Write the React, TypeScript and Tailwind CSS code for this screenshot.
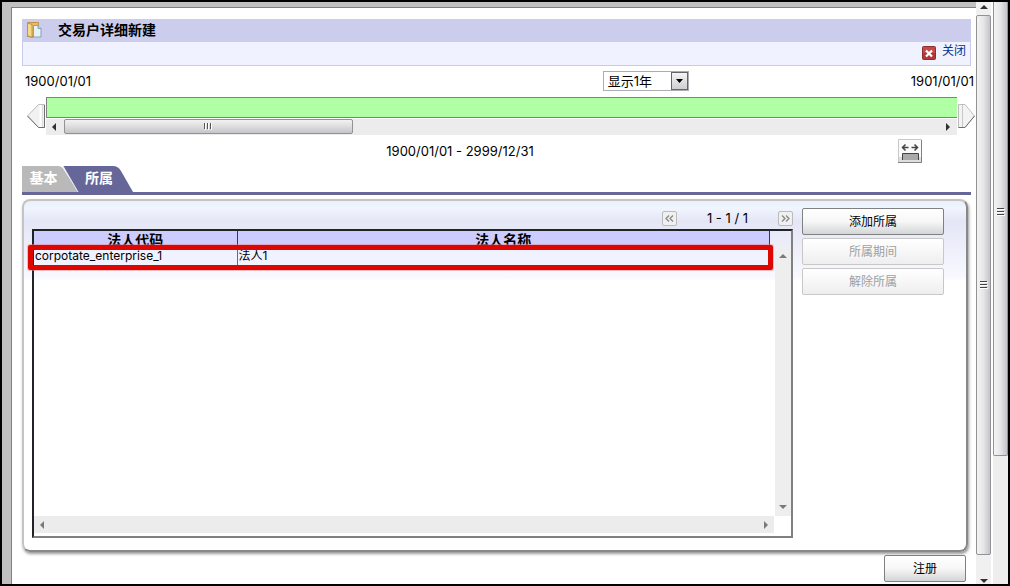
import { ReactNode } from "react"

type Direction = "up" | "down" | "left" | "right"

const arrowPaths: Record<Direction, string> = {
  up: "M0 6 4 2l4 4z",
  down: "M0 2h8L4 6z",
  left: "M6 0v8L2 4z",
  right: "M2 0l4 4-4 4z",
}

function ArrowButton({ direction, dim, className }: { direction: Direction; dim?: boolean; className: string }) {
  return (
    <button
      type="button"
      aria-label={`scroll ${direction}`}
      className={`flex shrink-0 items-center justify-center ${className}`}
    >
      <svg viewBox="0 0 8 8" className="size-2">
        <path d={arrowPaths[direction]} fill={dim ? "#7a7a7a" : "#303030"} />
      </svg>
    </button>
  )
}

function VerticalGrip() {
  return (
    <svg viewBox="0 0 8 8" className="size-2">
      <path d="M0 1.500h8M0 4.500h8M0 7.500h8" stroke="#fff" />
      <path d="M0 .500h7M0 3.500h7M0 6.500h7" stroke="#444" />
    </svg>
  )
}

function PageScrollbar() {
  return (
    <div className="flex w-[15px] shrink-0 flex-col bg-[#f0f0f0]">
      <ArrowButton direction="up" className="h-[13px] w-full pb-1" />
      <div className="flex grow-[24] items-center justify-center rounded-xs border border-[#929292] bg-linear-to-r from-[#f4f4f4] via-[#e6e6e8] to-[#c4c4ca]">
        <VerticalGrip />
      </div>
      <div className="grow" />
      <ArrowButton direction="down" className="h-[7px] w-full" />
    </div>
  )
}

function OuterScrollbar() {
  return (
    <div className="ml-0.5 flex w-[15px] shrink-0 flex-col bg-[#eee]">
      <div className="flex h-[78%] items-center justify-center rounded-b-xs border border-t-0 border-[#929292] bg-linear-to-r from-[#f4f4f4] via-[#e6e6e8] to-[#c4c4ca] pb-8">
        <VerticalGrip />
      </div>
    </div>
  )
}

function TitleBar() {
  return (
    <header>
      <div className="flex h-[23px] items-center bg-[#cccdec] pb-0.5 pl-1">
        <svg viewBox="0 0 16 16" className="size-4 shrink-0">
          <path d="M0 15h3l3 1 2-1v-1H2z" fill="#a58a60" />
          <path d="M1.500.500h11v13.500h-11z" fill="#e9bd5c" stroke="#c2924a" />
          <path d="M1.500 1l4.500 1.500V15.500l-4.500-2z" fill="#f7d988" stroke="#c2924a" />
          <path d="M7.500 3.500h4.500l3 3v8.500H7.500z" fill="#e6f2f8" stroke="#86a3b3" />
          <path d="M12 3.500v3h3" fill="#bcd5e2" stroke="#86a3b3" />
        </svg>
        <h1 className="ml-4 text-[14px] leading-5 font-bold">交易户详细新建</h1>
      </div>
      <div className="flex h-6 items-start justify-end border border-t-0 border-[#c9caea] bg-[#f0f2ff] pr-1">
        <a href="#" className="flex items-end gap-1.5 text-[12px] leading-[18px] text-[#003399]">
          <svg viewBox="0 0 14 14" className="size-3.5">
            <rect x=".5" y=".5" width="13" height="13" rx="1" fill="#c44a4a" stroke="#8c2f2f" />
            <path d="M1 7h12v6H1z" fill="#b23838" />
            <path d="M4 4.500l6 6M10 4.500l-6 6" stroke="#fff" strokeWidth="2.200" />
          </svg>
          关闭
        </a>
      </div>
    </header>
  )
}

function PeriodSelect() {
  return (
    <div className="relative mr-[222px] ml-auto">
      <select
        aria-label="显示期间"
        className="block h-5 w-[86px] appearance-none border border-[#abadb3] bg-white pl-1 text-[13px] leading-4"
      >
        <option>显示1年</option>
      </select>
      <span className="pointer-events-none absolute inset-y-px right-px flex w-[17px] items-center justify-center border border-[#666] bg-linear-to-b from-[#f4f4f4] to-[#cfcfcf]">
        <svg viewBox="0 0 7 4" className="h-1 w-[7px]">
          <path d="M0 0h7L3.500 4z" />
        </svg>
      </span>
    </div>
  )
}

function Timeline() {
  return (
    <section className="pt-[5px]">
      <div className="-mr-1.5 flex h-5 items-center pr-[3px] pl-[3px] text-[13px] leading-5">
        <span>1900/01/01</span>
        <PeriodSelect />
        <span>1901/01/01</span>
      </div>
      <div className="-mr-1 mt-1.5 flex items-start pl-[5px]">
        <button type="button" aria-label="上一期间" className="mt-[7px] shrink-0">
          <svg viewBox="0 0 19 24" className="h-6 w-[19px]">
            <path d="M.5 12 11.500.500h6v23h-6z" fill="#f1f1f1" stroke="#bdbdbd" />
            <path d="M.5 12l11 11.500h6V1" fill="none" stroke="#6e6e6e" />
            <path d="M13.500 1v22" stroke="#fff" strokeWidth="2" />
            <path d="M15.500 1v22" stroke="#ddd" />
          </svg>
        </button>
        <div className="min-w-0 flex-1">
          <div className="h-[21px] border border-r-0 border-[#808080] bg-[#b0ffa4]" />
          <div className="mt-px flex h-4 bg-[#ececec]">
            <ArrowButton direction="left" className="w-[18px] pr-0.5" />
            <div className="flex h-[15px] w-[33%] max-w-[289px] items-center justify-center rounded-xs border border-[#929292] bg-linear-to-b from-[#f2f2f2] via-[#dddde0] to-[#c6c6c9]">
              <svg viewBox="0 0 9 7" className="h-[7px] w-[9px]">
                <path d="M1.500 0v7M4.500 0v7M7.500 0v7" stroke="#fff" />
                <path d="M.5 0v6M3.500 0v6M6.500 0v6" stroke="#555" />
              </svg>
            </div>
            <ArrowButton direction="right" className="ml-auto w-[18px]" />
          </div>
        </div>
        <button type="button" aria-label="下一期间" className="mt-[7px] ml-px shrink-0">
          <svg viewBox="0 0 17 24" className="h-6 w-[17px]">
            <path d="M.5.500H7l9.500 11.500L7 23.500H.500z" fill="#f3f3f3" stroke="#bdbdbd" />
            <path d="M.5 23.500H7L16.500 12" fill="none" stroke="#6e6e6e" />
            <path d="M4.500 1v22" stroke="#c8c8c8" />
          </svg>
        </button>
      </div>
      <div className="mt-1 flex h-6 items-center">
        <p className="flex-1 text-center text-[13px] leading-6">1900/01/01 - 2999/12/31</p>
        <button type="button" aria-label="显示全部期间" className="mr-[49px]">
          <svg viewBox="0 0 24 24" className="size-6">
            <path d="M.5.500h23v23H.500z" fill="#fbfbfb" stroke="#c8c8c8" />
            <path d="M1 18h22v5H1z" fill="#dedede" />
            <path d="M0 23.500h23.500V1" fill="none" stroke="#808080" />
            <path
              d="M4.500 8.500h6M13.500 8.500h6M7.500 5.500l-3 3 3 3M16.500 5.500l3 3-3 3"
              fill="none"
              stroke="#444"
              strokeWidth="1.500"
            />
            <path d="M4.500 21v-6h16v6z" fill="#aaa" />
            <path d="M4.500 21v-6.500h16V21" fill="none" stroke="#444" />
          </svg>
        </button>
      </div>
    </section>
  )
}

function Tabs() {
  return (
    <nav className="mt-[3px] flex h-[29px] items-start border-b-[3px] border-[#666699] text-[14px] leading-6 font-bold text-white">
      <button type="button" className="relative h-[26px] w-[57px] pr-3.5 pb-0.5">
        <svg viewBox="0 0 57 26" className="absolute inset-0 h-[26px] w-[57px]">
          <path d="M0 0h36q4 0 6 4l14 22H0z" fill="#b9b9b9" />
        </svg>
        <span className="relative">基本</span>
      </button>
      <button type="button" className="relative -ml-4 h-[26px] w-[70px] pb-0.5 pl-4 text-left">
        <svg viewBox="0 0 70 26" className="absolute inset-0 h-[26px] w-[70px]">
          <path d="M0 0h50q5 0 8 5l12 21H15z" fill="#666699" />
          <path d="M0 0l15 26" stroke="#e6e6ee" />
        </svg>
        <span className="relative ml-1.5">所属</span>
      </button>
    </nav>
  )
}

function PageButton({ label, children }: { label: string; children: ReactNode }) {
  return (
    <button
      type="button"
      aria-label={label}
      className="flex size-[15px] items-center justify-center rounded-xs border border-[#bbb] bg-[#f0f0f0]"
    >
      <svg viewBox="0 0 9 7" className="h-[7px] w-[9px]" fill="none" stroke="#888" strokeWidth="1.300">
        {children}
      </svg>
    </button>
  )
}

function CorporationTable() {
  return (
    <div className="flex min-w-0 flex-1 flex-col">
      <div className="flex h-[28px] items-center justify-end pt-[6px]">
        <PageButton label="上一页">
          <path d="M4 .500l-3 3 3 3M8 .500l-3 3 3 3" />
        </PageButton>
        <span className="w-[101px] text-center text-[13px] leading-4 whitespace-pre">1 - 1 / 1</span>
        <PageButton label="下一页">
          <path d="M1 .500l3 3-3 3M5 .500l3 3-3 3" />
        </PageButton>
      </div>
      <div className="flex flex-1 flex-col border-2 border-t-[#202428] border-r-[#808080] border-b-[#808080] border-l-[#202428]">
        <div className="flex flex-1">
          <div className="relative mr-[5px] flex-1">
            <table className="w-full table-fixed border-collapse text-[12px]">
              <thead>
                <tr className="h-[17px] bg-[#ccccff] text-[14px] leading-4">
                  <th className="w-[203px] border-r border-[#333366] p-0">法人代码</th>
                  <th className="border-r border-[#333366] p-0">法人名称</th>
                </tr>
              </thead>
              <tbody>
                <tr className="h-[17px] bg-[#f0f2ff] leading-4">
                  <td className="border-r border-b border-[#666699] p-0 pl-px">corpotate_enterprise_1</td>
                  <td className="border-b border-[#666699] p-0 pl-px">法人1</td>
                </tr>
              </tbody>
            </table>
            <div className="pointer-events-none absolute top-3.5 -right-[3px] -left-1.5 h-[25px] rounded-xs border-[5px] border-[#dd0600] ring-1 ring-[#f08080]/50" />
          </div>
          <div className="mt-4 flex w-4 flex-col justify-between bg-[#eee]">
            <ArrowButton direction="up" dim className="h-[18px]" />
            <ArrowButton direction="down" dim className="h-[18px]" />
          </div>
        </div>
        <div className="mr-[17px] mb-[3px] flex h-[17px] justify-between bg-[#ececec]">
          <ArrowButton direction="left" dim className="w-4" />
          <ArrowButton direction="right" dim className="w-4" />
        </div>
      </div>
    </div>
  )
}

function ActionButton({ children, disabled }: { children: ReactNode; disabled?: boolean }) {
  return (
    <button
      type="button"
      disabled={disabled}
      className="h-[27px] rounded-xs border border-[#808080] bg-linear-to-b from-white via-[#f7f7f7] to-[#d4d5d8] text-[12px] leading-6 disabled:border-[#c8c8c8] disabled:to-[#eee] disabled:text-[#a0a0a0]"
    >
      {children}
    </button>
  )
}

export default function App() {
  return (
    <div className="flex min-h-screen border-2 border-black bg-white font-[Inter,'Noto_Sans_CJK_SC',sans-serif] text-black">
      <div className="flex min-w-0 flex-1 bg-[#c0c0c0] pt-[5px] pl-[9px]">
        <main className="flex min-w-0 flex-1 flex-col overflow-hidden border-t border-l border-[#808080] bg-white pt-[11px] pr-[5px] pb-0.5 pl-2.5">
          <TitleBar />
          <Timeline />
          <Tabs />
          <section className="mt-1 mr-[3px] flex flex-1 rounded-lg border-2 border-t-[#c4c4c4] border-r-[#888] border-b-[#888] border-l-[#c4c4c4] bg-[linear-gradient(#e9f1fa_0px,#f0f4fd_8px,#e4e6f6_20px,#f8f8fe_76px,#fff_80px)] px-2 pb-3 shadow-[1px_2px_3px_#999]">
            <CorporationTable />
            <div className="mr-3.5 ml-[9px] flex w-[142px] flex-col gap-[3px] pt-[7px]">
              <ActionButton>添加所属</ActionButton>
              <ActionButton disabled>所属期间</ActionButton>
              <ActionButton disabled>解除所属</ActionButton>
            </div>
          </section>
          <footer className="mt-[3px] mr-[5px] flex justify-end">
            <div className="grid w-[82px]">
              <ActionButton>注册</ActionButton>
            </div>
          </footer>
        </main>
      </div>
      <PageScrollbar />
      <OuterScrollbar />
    </div>
  )
}
